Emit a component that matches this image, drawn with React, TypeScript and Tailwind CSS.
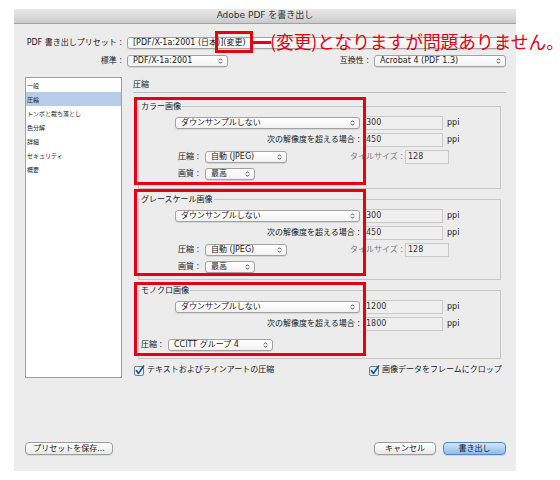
import React from "react";

function Arrows() {
  return (
    <svg width="5" height="8" viewBox="0 0 5 8" className="shrink-0">
      <path d="M1 3.3 L2.5 1.7 L4 3.3" fill="none" stroke="#3a3a3a" strokeWidth="0.9" />
      <path d="M1 4.7 L2.5 6.3 L4 4.7" fill="none" stroke="#3a3a3a" strokeWidth="0.9" />
    </svg>
  );
}

function Select({ children, className = "" }: { children: React.ReactNode; className?: string }) {
  return (
    <div
      className={
        "flex h-[12px] items-center justify-between rounded-[3px] border border-[#a3a3a3] bg-linear-to-b from-white to-[#f2f2f2] pl-[5px] pr-[4px] shadow-[0_0.5px_0.5px_rgba(0,0,0,0.18)] " +
        className
      }
    >
      <span className="whitespace-nowrap leading-[10px]">{children}</span>
      <Arrows />
    </div>
  );
}

function Input({ children, className = "" }: { children: React.ReactNode; className?: string }) {
  return (
    <div
      className={
        "flex h-[14px] items-center border border-[#c9c9c9] bg-[#efefef] pl-[2px] leading-[10px] text-[#333] " + className
      }
    >
      {children}
    </div>
  );
}

function Check() {
  return (
    <svg width="11" height="11" viewBox="0 0 11 11" className="shrink-0">
      <rect x="0.5" y="1.5" width="9" height="9" rx="1.5" fill="#e2edf9" stroke="#6b7e9a" />
      <path d="M2.4 5.6 L4.5 8.4 L9.6 1" fill="none" stroke="#1d4b92" strokeWidth="1.6" strokeLinecap="round" strokeLinejoin="round" />
    </svg>
  );
}

function Group({
  title,
  children,
  className = "",
  red,
}: {
  title: string;
  children: React.ReactNode;
  className?: string;
  red: React.ReactNode;
}) {
  return (
    <div className={"relative ml-[5px] mr-[5px] border border-[#c6c6c6] " + className}>
      <div className="-mt-[6px] flex h-[11px] items-center pl-[1px]">
        <span className="bg-[#ececec] px-[1px] leading-[10px]">{title}</span>
      </div>
      {children}
      {red}
    </div>
  );
}

function RowRes({ value }: { value: string }) {
  return (
    <div className="flex h-[17px] items-center">
      <div className="w-[221px] text-right whitespace-nowrap">次の解像度を超える場合 :</div>
      <Input className="ml-[3px] w-[80px]">{value}</Input>
      <span className="ml-[4px]">ppi</span>
    </div>
  );
}

function RowDown({ value }: { value: string }) {
  return (
    <div className="mt-[2px] flex h-[17px] items-center">
      <div className="flex w-[221px] pl-[36px]">
        <Select className="w-full">ダウンサンプルしない</Select>
      </div>
      <Input className="ml-[3px] w-[80px]">{value}</Input>
      <span className="ml-[4px]">ppi</span>
    </div>
  );
}

function RowComp() {
  return (
    <div className="flex h-[17px] items-center">
      <div className="ml-[39px] w-[27px] whitespace-nowrap">圧縮 :</div>
      <Select className="w-[82px]">自動 (JPEG)</Select>
      <div className="w-[116px] text-right whitespace-nowrap text-[#7a7a7a]">タイルサイズ :</div>
      <Input className="ml-[2px] w-[44px]">128</Input>
    </div>
  );
}

function RowQuality() {
  return (
    <div className="flex h-[17px] items-center">
      <div className="ml-[39px] w-[27px] whitespace-nowrap">画質 :</div>
      <Select className="w-[50px]">最高</Select>
    </div>
  );
}

const sideItems = ["一般", "圧縮", "トンボと裁ち落とし", "色分解", "詳細", "セキュリティ", "概要"];

export default function App() {
  return (
    <div className="relative min-h-[480px] w-[560px] bg-white pl-[14px] pt-[9px] font-['DejaVu_Sans','Noto_Sans_CJK_JP',sans-serif] text-[8px] text-[#1a1a1a]">
      <div className="flex h-[462px] w-[502px] flex-col bg-[#ececec]">
        {/* title bar */}
        <div className="flex h-[15px] items-center justify-center rounded-t-[3px] border-b border-[#a2a2a2] bg-linear-to-b from-[#e9e9e9] to-[#cbcbcb] text-[9px] text-[#333]">
          Adobe PDF を書き出し
        </div>

        <div className="pl-[11px] pr-[10px]">
          {/* preset row */}
          <div className="mt-[13px] flex h-[11px] items-center">
            <div className="w-[97px] text-right whitespace-nowrap">PDF 書き出しプリセット :</div>
            <Select className="ml-[5px] flex-1">[PDF/X-1a:2001 (日本)](変更)</Select>
          </div>

          {/* standard row */}
          <div className="mt-[7px] flex h-[11px] items-center">
            <div className="w-[97px] text-right whitespace-nowrap">標準 :</div>
            <Select className="ml-[5px] w-[101px]">PDF/X-1a:2001</Select>
            <div className="flex-1" />
            <div className="whitespace-nowrap">互換性 :</div>
            <Select className="ml-[5px] w-[132px]">Acrobat 4 (PDF 1.3)</Select>
          </div>

          {/* main area */}
          <div className="mt-[11px] flex">
            <div className="h-[301px] w-[97px] border border-[#a0a0a0] bg-white">
              {sideItems.map((s, i) => (
                <div
                  key={s}
                  className={
                    i === 1
                      ? "flex h-[14px] items-center bg-[#b6cce8] pl-[1px] text-[6px] whitespace-nowrap"
                      : "flex h-[14px] items-center pl-[1px] text-[6px] whitespace-nowrap"
                  }
                >
                  {s}
                </div>
              ))}
            </div>

            <div className="ml-[11px] flex-1">
              <div className="flex h-[16px] items-center border-b border-[#bdbdbd]">圧縮</div>

              <Group
                title="カラー画像"
                className="mt-[13px] pb-[6px]"
                red={<div className="absolute left-[-5px] top-[-10px] h-[88px] w-[232px] border-[3px] border-[#e60012]" />}
              >
                <RowDown value="300" />
                <RowRes value="450" />
                <RowComp />
                <RowQuality />
              </Group>

              <Group
                title="グレースケール画像"
                className="mt-[10px] pb-[4px]"
                red={<div className="absolute left-[-5px] top-[-11px] h-[87px] w-[232px] border-[3px] border-[#e60012]" />}
              >
                <RowDown value="300" />
                <RowRes value="450" />
                <RowComp />
                <RowQuality />
              </Group>

              <Group
                title="モノクロ画像"
                className="mt-[10px] pb-[5px]"
                red={<div className="absolute left-[-5px] top-[-9px] h-[74px] w-[232px] border-[3px] border-[#e60012]" />}
              >
                <RowDown value="1200" />
                <RowRes value="1800" />
                <div className="mt-[4px] flex h-[17px] items-center">
                  <div className="ml-[2px] w-[27px] whitespace-nowrap">圧縮 :</div>
                  <Select className="w-[105px]">CCITT グループ 4</Select>
                </div>
              </Group>

              <div className="ml-[1px] mt-[5px] flex h-[12px] items-center">
                <div className="flex w-[235px] items-center gap-[2px]">
                  <Check />
                  <span className="whitespace-nowrap">テキストおよびラインアートの圧縮</span>
                </div>
                <div className="flex items-center gap-[2px]">
                  <Check />
                  <span className="whitespace-nowrap">画像データをフレームにクロップ</span>
                </div>
              </div>
            </div>
          </div>
        </div>

        {/* buttons */}
        <div className="mb-[16px] mt-auto flex items-center pl-[11px] pr-[10px]">
          <div className="flex h-[13px] w-[88px] items-center justify-center rounded-[4px] border border-[#9c9c9c] bg-linear-to-b from-white to-[#e8e8e8] leading-[10px] shadow-[0_1px_0_rgba(0,0,0,0.07)]">
            プリセットを保存...
          </div>
          <div className="flex-1" />
          <div className="flex h-[13px] w-[62px] items-center justify-center rounded-[4px] border border-[#9c9c9c] bg-linear-to-b from-white to-[#e8e8e8] leading-[10px] shadow-[0_1px_0_rgba(0,0,0,0.07)]">
            キャンセル
          </div>
          <div className="ml-[7px] flex h-[13px] w-[63px] items-center justify-center rounded-[4px] border border-[#5a86c0] bg-linear-to-b from-[#d2e6fb] to-[#8dbbeb] leading-[10px] shadow-[0_1px_0_rgba(0,0,0,0.1)]">
            書き出し
          </div>
        </div>
      </div>

      {/* red annotation on the preset */}
      <div className="absolute left-[215px] top-[31px] h-[22px] w-[38px] border-[3px] border-[#e60012]" />
      <div className="absolute left-[253px] top-[41px] h-[3px] w-[18px] bg-[#e60012]" />
      <div className="absolute left-[270px] top-[31px] whitespace-nowrap font-['Noto_Sans_CJK_JP',sans-serif] text-[17.7px] leading-[20px] text-[#e60012]">
        (変更)となりますが問題ありません。
      </div>
    </div>
  );
}
